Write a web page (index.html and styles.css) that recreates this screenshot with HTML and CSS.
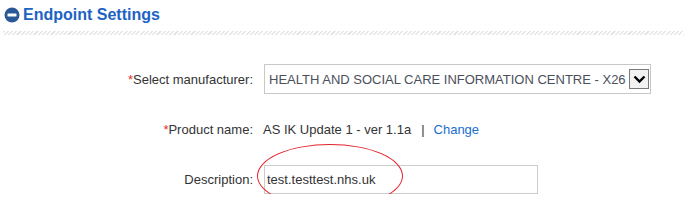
FILE: index.html
```html
<!DOCTYPE html>
<html lang="en">
<head>
    <meta charset="UTF-8">
    <title>Endpoint Settings</title>
    <link rel="stylesheet" href="styles.css">
</head>
<body>
    <div class="panel">
        <h2 class="section-title">
            <svg class="toggle" width="16" height="16" viewBox="0 0 16 16">
                <circle cx="8" cy="8" r="7.5" fill="#2b5797"/>
                <rect x="3.5" y="6.5" width="9" height="3" rx="0.5" fill="#ffffff"/>
            </svg>
            Endpoint Settings
        </h2>
        <div class="divider"></div>

        <div class="form">
            <div class="label"><span class="req">*</span>Select manufacturer:</div>
            <div class="field">
                <div class="select">
                    <span class="select-text">HEALTH AND SOCIAL CARE INFORMATION CENTRE - X26</span>
                    <span class="select-arrow">
                        <svg width="13" height="9" viewBox="0 0 13 9">
                            <path d="M1.5 1.5 L6.5 6.5 L11.5 1.5" fill="none" stroke="#000" stroke-width="2.4"/>
                        </svg>
                    </span>
                </div>
            </div>

            <div class="label"><span class="req">*</span>Product name:</div>
            <div class="field">
                <span class="value">AS IK Update 1 - ver 1.1a</span>
                <span class="sep">|</span>
                <a href="#" class="link">Change</a>
            </div>

            <div class="label">Description:</div>
            <div class="field annotated">
                <input type="text" class="text-input" value="test.testtest.nhs.uk">
                <!-- red annotation ring drawn over the field -->
                <div class="ring"></div>
            </div>
        </div>
    </div>
</body>
</html>
```

FILE: styles.css
```css
body {
    margin: 0;
    font-family: "Liberation Sans", Arial, sans-serif;
    font-size: 13px;
    color: #333333;
    background-color: #ffffff;
}

.panel {
    width: 687px;
}

.section-title {
    display: flex;
    align-items: center;
    gap: 3px;
    margin: 0;
    padding: 4px 0 0 4px;
    height: 22px;
    font-size: 16px;
    font-weight: bold;
    color: #1c63c4;
}

.divider {
    margin: 5px 3px 0 3px;
    height: 4px;
    background: repeating-linear-gradient(135deg, #e6e6e6 0 1.5px, #ffffff 1.5px 3px);
}

.form {
    display: grid;
    grid-template-columns: 253px 1fr;
    grid-auto-rows: 30px;
    column-gap: 11px;
    row-gap: 20px;
    margin-top: 29px;
}

.label {
    display: flex;
    align-items: center;
    justify-content: flex-end;
    white-space: nowrap;
}

.req {
    color: #e03030;
}

.field {
    display: flex;
    align-items: center;
}

.select {
    box-sizing: border-box;
    display: flex;
    align-items: center;
    justify-content: space-between;
    width: 387px;
    height: 30px;
    padding: 0 1px 0 4px;
    border: 1px solid #c8c8c8;
    color: #4a4f5c;
}

.select-text {
    white-space: nowrap;
}

.select-arrow {
    box-sizing: border-box;
    display: flex;
    align-items: center;
    justify-content: center;
    width: 20px;
    height: 20px;
    border: 1px solid #7a7a7a;
    background-color: #f2f2f2;
}

.value {
    margin-left: -1px;
}

.sep {
    margin: 0 9px 0 10px;
}

.link {
    color: #1a6ed0;
    text-decoration: none;
}

.annotated {
    position: relative;
}

.text-input {
    box-sizing: border-box;
    width: 274px;
    height: 29px;
    margin-top: 1px;
    padding: 0 2px;
    border: 1px solid #cccccc;
    font-family: "Liberation Sans", Arial, sans-serif;
    font-size: 13px;
    color: #333333;
    outline: none;
}

.ring {
    position: absolute;
    left: -7px;
    top: -20px;
    width: 144px;
    height: 62px;
    border: 1px solid #e4232d;
    border-radius: 50%;
    pointer-events: none;
}
```
